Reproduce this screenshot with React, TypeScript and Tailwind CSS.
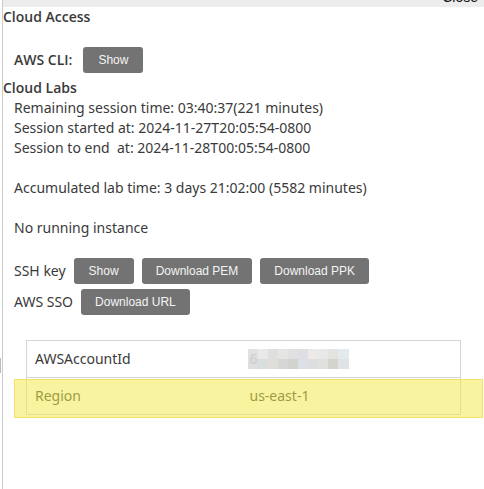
import type { ReactNode } from "react";

function ActionButton({ children }: { children: ReactNode }) {
  return (
    <button
      type="button"
      className="h-[26px] min-w-[60px] shrink-0 rounded-[3px] bg-[#737373] px-[14px] font-['Liberation_Sans',Arial,sans-serif] text-xs leading-6 text-[#f4f4f4]"
    >
      {children}
    </button>
  );
}

const maskCells = [
  "bg-[#e1e1e1]", "bg-[#e9e9e9]", "bg-[#dfdfdf]", "bg-[#e6e5e3]", "bg-[#e0e0e0]",
  "bg-[#dddfe2]", "bg-[#ece9e7]", "bg-[#e8e8e8]", "bg-[#e4e3df]", "bg-[#e4e9ed]",
  "bg-[#dedede]", "bg-[#dadedd]", "bg-[#e0dedb]", "bg-[#d6d6d6]", "bg-[#d2d2ce]",
  "bg-[#dce0e4]", "bg-[#dcdfde]", "bg-[#e0e0df]", "bg-[#d4d3cd]", "bg-[#dfe3e7]",
];

function MaskedValue() {
  return (
    <div className="relative h-5 w-[101px]">
      <div className="grid h-5 grid-cols-10 grid-rows-2">
        {maskCells.map((cell, i) => (
          <span key={i} className={cell} />
        ))}
      </div>
      <span className="absolute top-0 left-0.5 text-[#cdcdcd]">6</span>
    </div>
  );
}

export default function App() {
  return (
    <div className="flex min-h-screen bg-white font-['Noto_Sans',sans-serif] text-sm leading-5 text-[#3a3a3a]">
      <aside className="flex w-[3px] shrink-0 flex-col border-r border-[#ccc]">
        <div className="mt-[358px] h-[15px] w-px bg-[#bbb]" />
      </aside>
      <main className="min-w-0 flex-1">
        <header className="flex h-[7px] items-end justify-end overflow-hidden bg-[#ededed] pr-[6px] pb-0.5">
          <button type="button" className="shrink-0 font-['Liberation_Sans',Arial,sans-serif] text-sm leading-4 text-[#111]">
            Close
          </button>
        </header>

        <h2 className="font-['Open_Sans',sans-serif] font-semibold">Cloud Access</h2>
        <div className="mt-5 flex items-center gap-[11px] pl-[11px]">
          <span className="font-['Open_Sans',sans-serif] font-semibold">AWS CLI:</span>
          <ActionButton>Show</ActionButton>
        </div>

        <h2 className="mt-[5px] font-['Open_Sans',sans-serif] font-semibold">Cloud Labs</h2>
        <div className="pl-[11px]">
          <p>Remaining session time: 03:40:37(221 minutes)</p>
          <p>Session started at: 2024-11-27T20:05:54-0800</p>
          <p className="whitespace-pre">{"Session to end  at: 2024-11-28T00:05:54-0800"}</p>
          <p className="mt-5">Accumulated lab time: 3 days 21:02:00 (5582 minutes)</p>
          <p className="mt-5">No running instance</p>

          <div className="mt-5 flex items-center gap-2">
            <span>SSH key</span>
            <ActionButton>Show</ActionButton>
            <ActionButton>Download PEM</ActionButton>
            <ActionButton>Download PPK</ActionButton>
          </div>
          <div className="mt-[5px] flex items-center gap-2">
            <span>AWS SSO</span>
            <ActionButton>Download URL</ActionButton>
          </div>

          <div className="relative mt-[25px] mr-px pr-[22px] pl-3">
            <table className="w-full border-collapse border border-[#d5d5d5]">
              <tbody>
                <tr className="h-[37px] border-b border-[#d5d5d5]">
                  <th scope="row" className="w-1/2 pl-2 text-left font-normal">AWSAccountId</th>
                  <td className="w-1/2 pl-1"><MaskedValue /></td>
                </tr>
                <tr className="h-[37px]">
                  <th scope="row" className="pl-2 text-left font-normal">Region</th>
                  <td className="pl-1.5">us-east-1</td>
                </tr>
              </tbody>
            </table>
            <div className="pointer-events-none absolute inset-x-0 top-[39px] h-[39px] border border-[#f5dc5a]/80 bg-[#f1e951]/55" />
          </div>
        </div>
      </main>
    </div>
  );
}
